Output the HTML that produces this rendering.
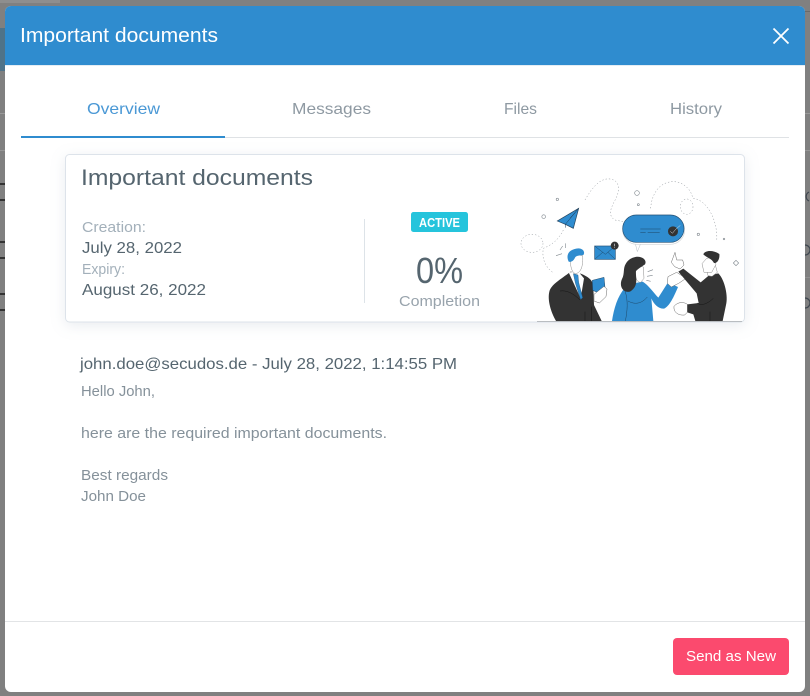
<!DOCTYPE html>
<html><head><meta charset="utf-8"><title>Important documents</title>
<style>
html,body{margin:0;padding:0;background:#808080;width:810px;height:696px;overflow:hidden}
svg{position:absolute;left:0;top:0;display:block}
text{font-family:"Liberation Sans",sans-serif}
</style></head><body>
<svg width="810" height="696" viewBox="0 0 810 696" xmlns="http://www.w3.org/2000/svg">
<defs><filter id="s" x="-10%" y="-20%" width="120%" height="140%"><feDropShadow dx="0" dy="3" stdDeviation="7" flood-color="#9aa8b8" flood-opacity=".22"/></filter></defs>
<!-- backdrop -->
<rect width="810" height="696" fill="#808080"/>
<rect x="0" y="0" width="60" height="3" fill="#8e8e8e"/>
<rect x="0" y="28" width="5" height="43" fill="#4f7389"/>
<rect x="0" y="113" width="5" height="1" fill="#999"/>
<rect x="0" y="150" width="5" height="1" fill="#969696"/>
<rect x="0" y="183" width="5" height="2" fill="#333"/>
<rect x="0" y="199" width="5" height="2" fill="#333"/>
<rect x="0" y="241" width="5" height="2" fill="#333"/>
<rect x="0" y="257" width="5" height="2" fill="#333"/>
<rect x="0" y="293" width="5" height="2" fill="#333"/>
<rect x="0" y="309" width="5" height="2" fill="#333"/>
<rect x="805" y="11" width="5" height="1" fill="#6a6a6a"/>
<rect x="805" y="113" width="5" height="1" fill="#999"/>
<rect x="805" y="150" width="5" height="1" fill="#969696"/>
<rect x="805" y="277" width="5" height="1" fill="#909090"/>
<path d="M809 192a5 5 0 0 0 0 9M805 245a5 5 0 0 1 0 10M805 298a5 5 0 0 1 0 10" fill="none" stroke="#3f4750" stroke-width="1.2"/>
<!-- modal -->
<rect x="5" y="6" width="800" height="686" rx="6" fill="#fff"/>
<path d="M5 65V12a6 6 0 0 1 6-6h788a6 6 0 0 1 6 6v53z" fill="#2f8ccf"/>
<rect x="5" y="65" width="800" height="1" fill="#e4edf4"/>
<text x="20" y="42" font-size="20.500" fill="#fff" textLength="198" lengthAdjust="spacingAndGlyphs">Important documents</text>
<path d="M773.500 28.500L788.500 43.500M788.500 28.500L773.500 43.500" stroke="#fff" stroke-width="1.800" fill="none"/>
<!-- tabs -->
<rect x="21" y="137" width="768" height="1" fill="#dfe2e5"/>
<rect x="21" y="136" width="204" height="2" fill="#2f8ccf"/>
<text x="87" y="114" font-size="16" fill="#4a98d5" textLength="73" lengthAdjust="spacingAndGlyphs">Overview</text>
<text x="292" y="114" font-size="16" fill="#8e99a2" textLength="79" lengthAdjust="spacingAndGlyphs">Messages</text>
<text x="504" y="114" font-size="16" fill="#8e99a2" textLength="33" lengthAdjust="spacingAndGlyphs">Files</text>
<text x="670" y="114" font-size="16" fill="#8e99a2" textLength="52" lengthAdjust="spacingAndGlyphs">History</text>
<!-- card -->
<rect x="65.500" y="154.500" width="679" height="167.500" rx="4" fill="#fff" stroke="#dde3ea" filter="url(#s)"/>
<text x="81" y="185" font-size="22" fill="#55656f" textLength="232" lengthAdjust="spacingAndGlyphs">Important documents</text>
<text x="82" y="232" font-size="14.500" fill="#a3b0ba" textLength="64" lengthAdjust="spacingAndGlyphs">Creation:</text>
<text x="82" y="253" font-size="16" fill="#55656f" textLength="100" lengthAdjust="spacingAndGlyphs">July 28, 2022</text>
<text x="82" y="274" font-size="14.500" fill="#a3b0ba" textLength="43" lengthAdjust="spacingAndGlyphs">Expiry:</text>
<text x="82" y="295" font-size="16" fill="#55656f" textLength="124" lengthAdjust="spacingAndGlyphs">August 26, 2022</text>
<rect x="364" y="219" width="1" height="84" fill="#dde3e8"/>
<rect x="411" y="212" width="57" height="20" rx="2.500" fill="#25c4dc"/>
<text x="419" y="227" font-size="12.500" font-weight="bold" fill="#fff" textLength="41" lengthAdjust="spacingAndGlyphs">ACTIVE</text>
<text x="416" y="283" font-size="36" fill="#55656f" textLength="47" lengthAdjust="spacingAndGlyphs">0%</text>
<text x="399" y="306" font-size="15" fill="#98a3ac" textLength="81" lengthAdjust="spacingAndGlyphs">Completion</text>
<!-- illustration -->
<g transform="translate(510 165) scale(.33333)">
<g fill="none" stroke="#8a9096" stroke-width="1.500" stroke-dasharray="4 6">
<path d="M225 105C245 70 270 38 300 42C330 46 330 75 318 100C305 125 290 150 315 165L340 170"/>
<path d="M422 130C425 85 450 50 490 50C520 50 545 75 548 100"/>
<path d="M550 100C590 105 625 165 620 230"/>
<ellipse cx="530" cy="125" rx="19" ry="23"/>
<ellipse cx="66" cy="235" rx="33" ry="27"/>
<path d="M160 195C145 225 125 240 100 250C95 280 105 305 128 322"/>
</g>
<g fill="none" stroke="#7d858c" stroke-width="1.800">
<circle cx="381" cy="84" r="7"/><circle cx="142" cy="103" r="3.500"/><circle cx="101" cy="155" r="5.500"/><circle cx="385" cy="119" r="3"/><circle cx="565" cy="208" r="3.500"/><circle cx="642" cy="222" r="2.500"/>
<path d="M678 286l8 8-8 8-8-8z"/>
<path d="M150 255l8-12M167 235v14M138 272l18-6M413 320l16-6M411 334l17-3M409 346l13 3"/>
</g>
<!-- plane -->
<path d="M206 130L142 168L166 178L190 190Z" fill="#2f8ccf" stroke="#23425c" stroke-width="2"/>
<path d="M206 130L166 178L166 188M206 130L180 160" fill="none" stroke="#1f3d58" stroke-width="1.500"/>
<!-- bubble -->
<path d="M376 236H392L382 260Z" fill="#fff" stroke="#b8bfc5" stroke-width="1.500"/>
<rect x="338" y="152" width="186" height="86" rx="43" fill="#fff" stroke="#cfd4d8" stroke-width="2"/>
<rect x="338" y="150" width="184" height="82" rx="41" fill="#2f8ccf" stroke="#234f73" stroke-width="2"/>
<path d="M391 192H452M391 203H407M413 203H449" stroke="#1d4666" stroke-width="1.500"/>
<circle cx="489" cy="199" r="15" fill="#333"/>
<path d="M481 199l6 6 10-12M497 193l14-12" fill="none" stroke="#dfe3e6" stroke-width="1.500"/>
<!-- envelope -->
<rect x="254" y="243" width="62" height="40" fill="#2f8ccf" stroke="#23527a" stroke-width="2"/>
<path d="M254 243L286 268L316 243M254 283L278 262M316 283L294 262" fill="none" stroke="#1d4666" stroke-width="1.500"/>
<circle cx="314" cy="242" r="12" fill="#333"/>
<rect x="313" y="236" width="2" height="8" fill="#ddd"/><rect x="313" y="246" width="2" height="2" fill="#ddd"/>
<!-- man left -->
<path d="M138 468C122 440 112 405 118 380C124 358 150 345 182 320L212 326C232 334 250 345 250 365L252 420L275 468Z" fill="#333"/>
<path d="M176 322L212 400L222 340L205 320Z" fill="#fff"/>
<path d="M190 326L204 330L206 352L218 398L212 404L196 354Z" fill="#2f8ccf" stroke="#1d4666"/>
<path d="M182 284C180 305 186 322 196 326C214 324 220 300 218 272L190 268Z" fill="#fff" stroke="#8a8a8a" stroke-width="1.500"/>
<path d="M176 290C166 268 178 252 205 250C220 250 226 262 220 270C205 272 197 272 194 280C190 288 182 292 176 290Z" fill="#2f8ccf"/>
<path d="M247 346L282 337L285 368L262 382L248 376Z" fill="#2f8ccf" stroke="#1d4666" stroke-width="1.500"/>
<path d="M252 388L272 372L282 364L291 372L288 395L268 414L252 408Z" fill="#fff" stroke="#666" stroke-width="1.500"/>
<path d="M150 378C170 375 190 385 210 405M225 440V468M245 425V468" fill="none" stroke="#151515" stroke-width="1.500"/>
<!-- woman -->
<path d="M306 468C312 430 322 395 345 368L372 355L398 350C415 360 432 385 445 398L474 352L504 366C492 395 478 425 462 431C446 432 432 418 424 400L430 468Z" fill="#2f8ccf"/>
<path d="M345 378C355 405 352 440 346 468M354 408C375 420 395 416 412 396" fill="none" stroke="#1d4666" stroke-width="1.500"/>
<path d="M378 300C372 330 378 352 392 352L402 340L400 306Z" fill="#fff" stroke="#8a8a8a" stroke-width="1.500"/>
<path d="M376 276C396 272 412 285 405 298C395 305 385 310 378 318C376 338 388 362 360 380C340 384 326 365 336 342C345 325 338 310 348 295C355 284 365 278 376 276Z" fill="#333"/>
<path d="M474 335L500 322L528 340L506 355L484 366L472 355Z" fill="#fff" stroke="#666" stroke-width="1.500"/>
<!-- man right -->
<path d="M505 320L520 311L572 352L596 332L625 325C645 345 655 395 648 420L638 468H556L550 448L532 442L532 418L566 414L560 385Z" fill="#333"/>
<path d="M590 315L594 332L606 334L622 322L616 300Z" fill="#fff" stroke="#8a8a8a" stroke-width="1.500"/>
<path d="M590 280L576 296L582 322L605 322L618 298L610 276Z" fill="#fff" stroke="#8a8a8a" stroke-width="1.500"/>
<path d="M580 268C585 255 610 255 628 267C630 282 622 296 612 294C605 280 590 278 580 268Z" fill="#333"/>
<path d="M495 262L500 285L518 285L522 300L510 312L494 305L484 292Z" fill="#fff" stroke="#666" stroke-width="1.500"/>
<path d="M492 424C505 408 525 412 532 418L532 442L524 450C505 452 490 442 492 424Z" fill="#fff" stroke="#666" stroke-width="1.500"/>
<path d="M562 414C572 425 595 415 610 400M600 440V468" fill="none" stroke="#151515" stroke-width="1.500"/>
</g>
<rect x="537" y="321" width="205" height="1" fill="#b9bdc1"/>
<!-- message -->
<text x="80" y="369" font-size="16" fill="#55656f" textLength="377" lengthAdjust="spacingAndGlyphs">john.doe@secudos.de - July 28, 2022, 1:14:55 PM</text>
<text x="81" y="396" font-size="14.500" fill="#85919a" textLength="74" lengthAdjust="spacingAndGlyphs">Hello John,</text>
<text x="81" y="438" font-size="14.500" fill="#85919a" textLength="306" lengthAdjust="spacingAndGlyphs">here are the required important documents.</text>
<text x="81" y="480" font-size="14.500" fill="#85919a" textLength="87" lengthAdjust="spacingAndGlyphs">Best regards</text>
<text x="81" y="501" font-size="14.500" fill="#85919a" textLength="65" lengthAdjust="spacingAndGlyphs">John Doe</text>
<!-- footer -->
<rect x="5" y="621" width="800" height="1" fill="#e2e4e6"/>
<rect x="673" y="638" width="116" height="37" rx="4" fill="#fb4a6e"/>
<text x="686" y="661" font-size="14.500" fill="#fff" textLength="90" lengthAdjust="spacingAndGlyphs">Send as New</text>
</svg>
</body></html>
